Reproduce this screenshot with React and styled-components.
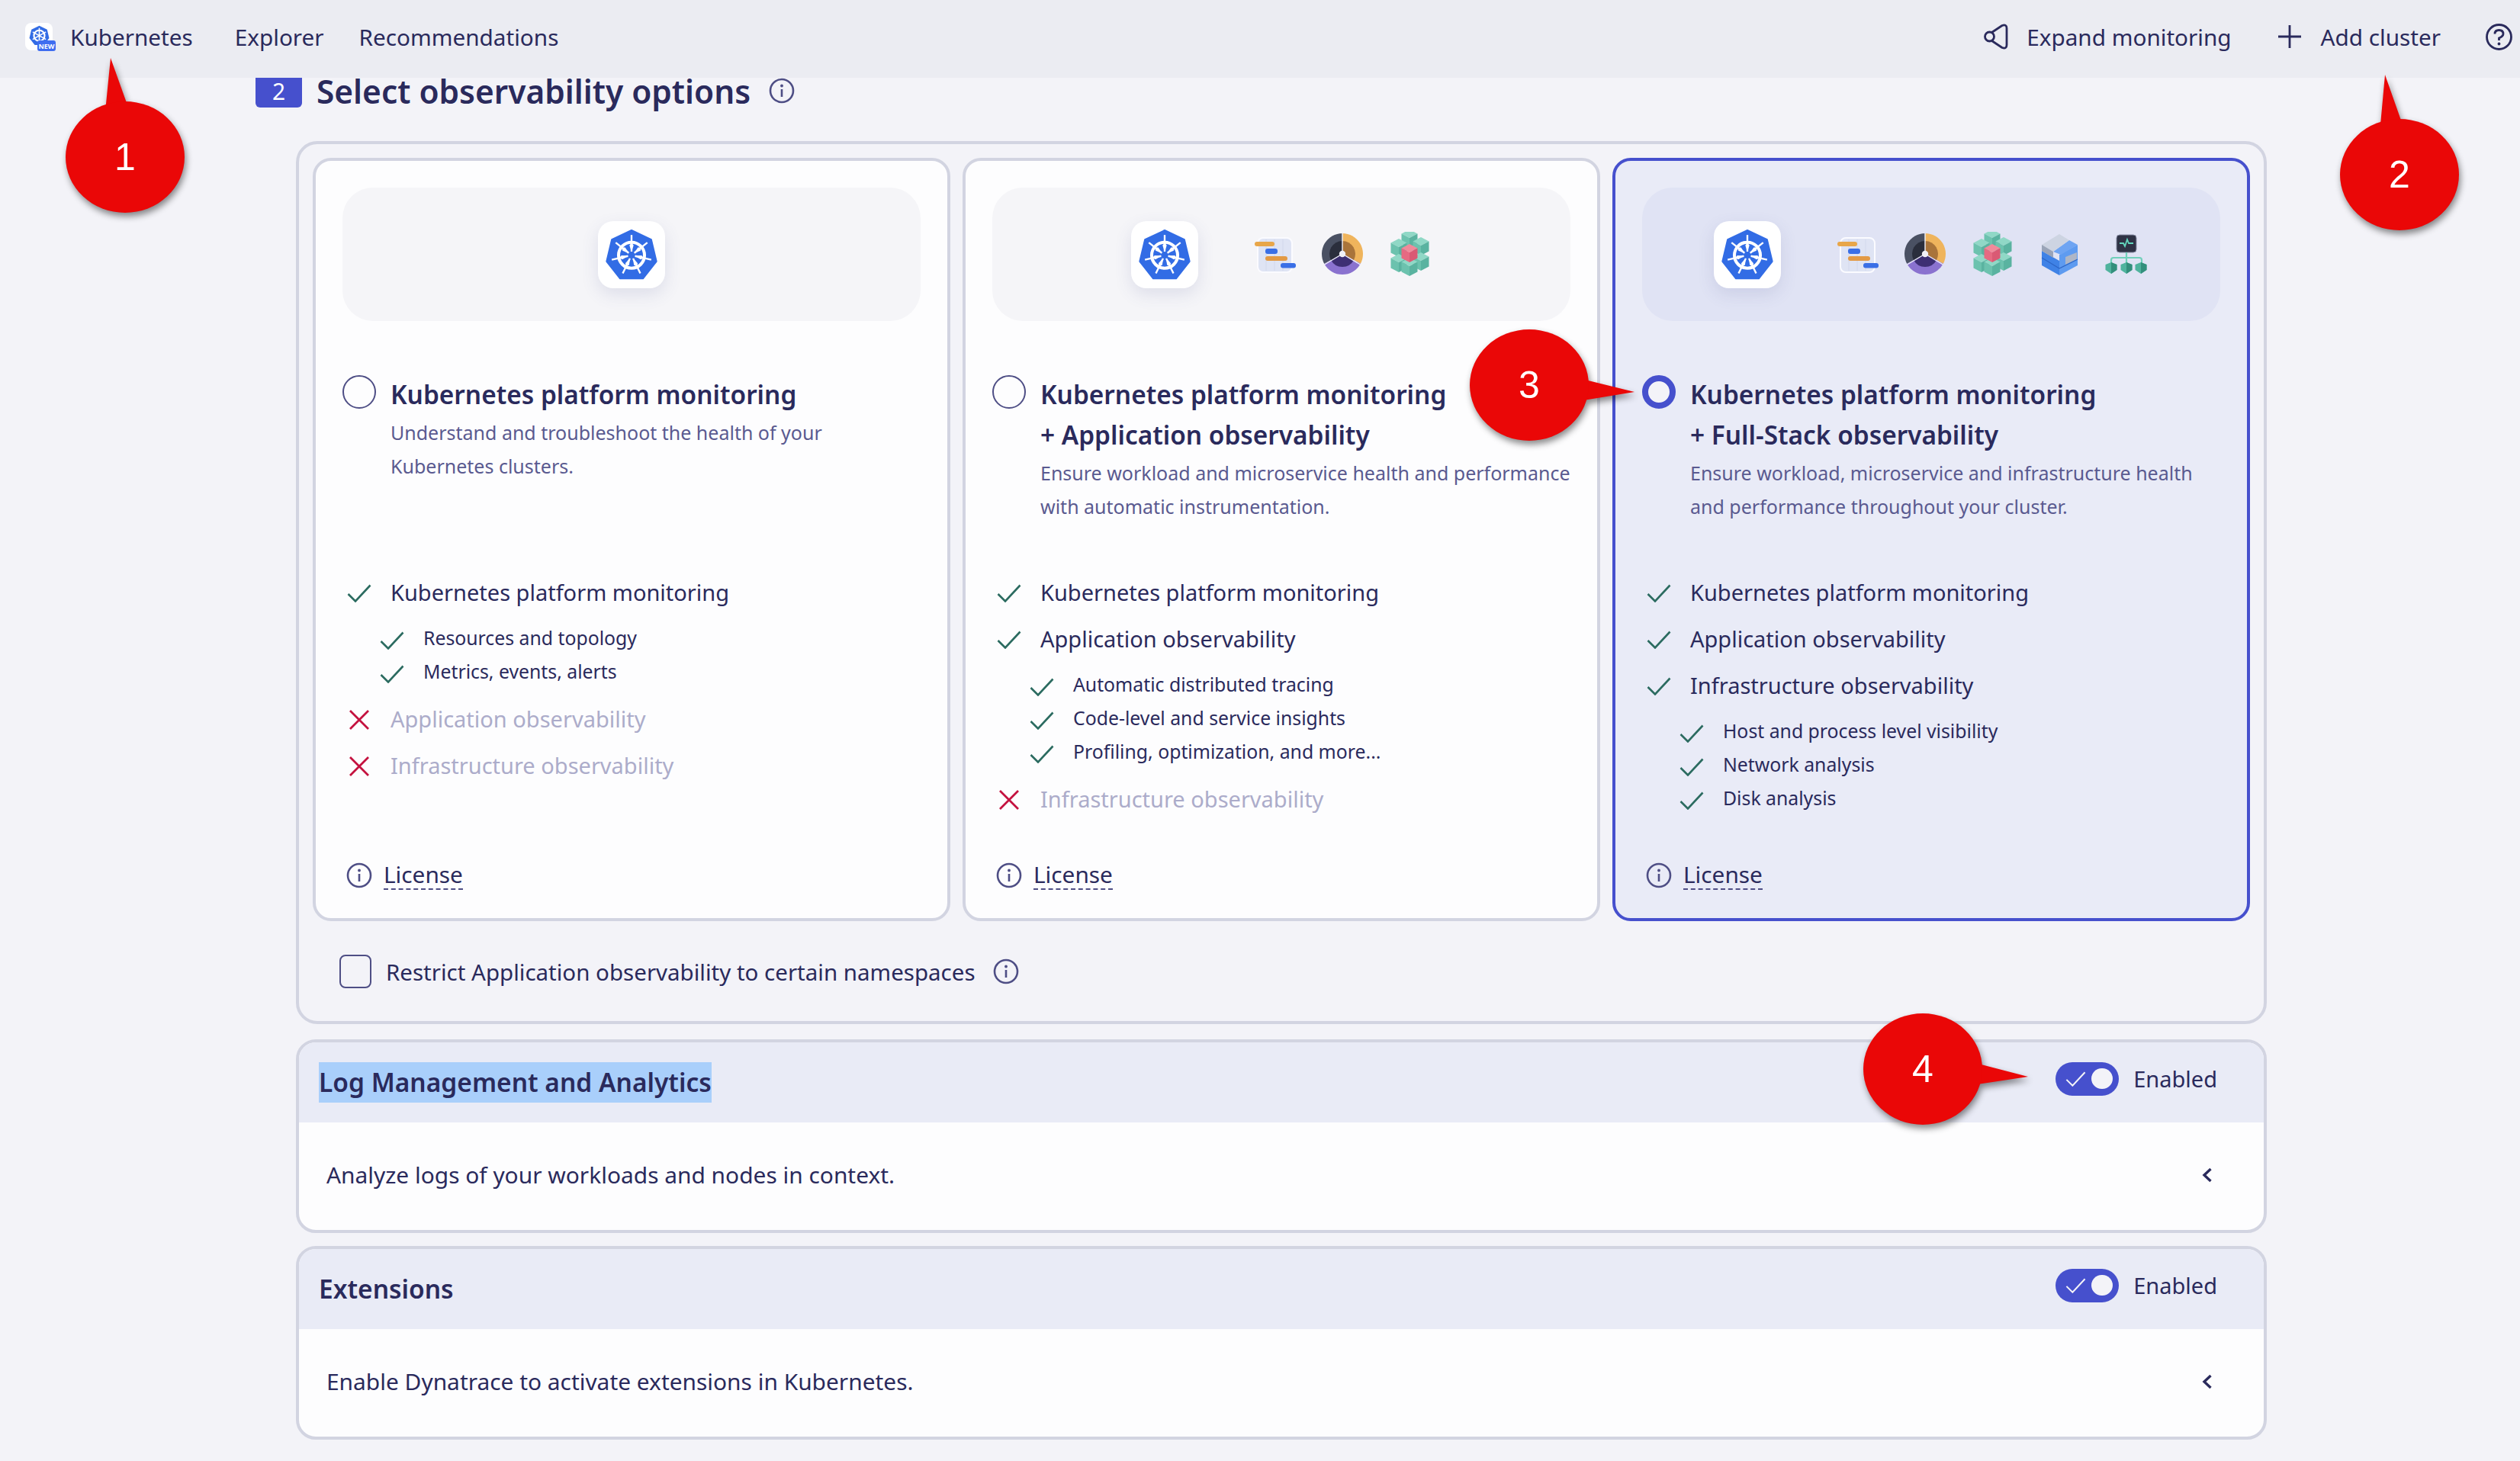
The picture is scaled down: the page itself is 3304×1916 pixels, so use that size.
import React from 'react'
import styled, { createGlobalStyle } from 'styled-components'

const navy = '#2a2a5c'
const muted = '#5a5a90'

const GlobalStyle = createGlobalStyle`
  html, body {
    margin: 0;
    padding: 0;
    background: #f3f3f8;
  }
  * {
    box-sizing: border-box;
  }
`

const Page = styled.div`
  position: relative;
  width: 3304px;
  height: 1916px;
  overflow: hidden;
  background: #f3f3f8;
  color: ${navy};
  font-family: "Noto Sans", "Open Sans", sans-serif;
`

const TopBar = styled.header`
  display: flex;
  align-items: center;
  height: 102px;
  padding: 0 10px 6px 33px;
  background: #ebecf2;
  font-size: 29.7px;
`

const TopLink = styled.span`
  margin-left: ${p => p.$gap}px;
  white-space: nowrap;
`

const TopActions = styled.div`
  display: flex;
  align-items: center;
  margin-left: auto;
`

const TopIcon = styled.svg`
  display: block;
  flex: none;
  margin-left: ${p => p.$gap || 0}px;
`

const Main = styled.main`
  padding-left: 335px;
`

const SectionRow = styled.div`
  display: flex;
  align-items: flex-start;
  height: 83px;
`

const StepBadge = styled.span`
  display: flex;
  align-items: center;
  justify-content: center;
  width: 61px;
  height: 39px;
  padding-bottom: 5px;
  border-radius: 0 0 6px 6px;
  background: #4650cd;
  color: #fff;
  font-size: 30px;
`

const SectionTitle = styled.h2`
  margin: 0 24px 0 19px;
  font-size: 42.4px;
  line-height: 36px;
  font-weight: 600;
  white-space: nowrap;
`

const InfoWrap = styled.span`
  display: flex;
  flex: none;
`

const Panel = styled.section`
  width: 2584px;
  height: 1158px;
  margin-left: 53px;
  padding: 18px 18px 0;
  border: 4px solid #d2d4e1;
  border-radius: 28px;
`

const Cards = styled.div`
  display: grid;
  grid-template-columns: repeat(3, 1fr);
  gap: 16px;
`

const Card = styled.article`
  display: flex;
  flex-direction: column;
  height: 1001px;
  padding: 35px 35px 34px;
  border: 4px solid ${p => (p.$selected ? '#4650cd' : '#d2d4e1')};
  border-radius: 24px;
  background: ${p => (p.$selected ? '#e9ebf7' : '#fdfdfe')};
`

const Illustration = styled.div`
  display: flex;
  align-items: center;
  justify-content: center;
  flex: none;
  height: 175px;
  border-radius: 40px;
  background: ${p => (p.$selected ? '#e0e3f4' : '#f5f5f8')};
`

const LogoTile = styled.div`
  display: flex;
  align-items: center;
  justify-content: center;
  width: 88px;
  height: 88px;
  border-radius: 20px;
  background: #fff;
  box-shadow: 0 8px 22px rgba(80, 86, 150, 0.14);
`

const ProductIcons = styled.div`
  display: flex;
  gap: 28px;
  margin-left: 71px;
`

const Head = styled.div`
  display: grid;
  grid-template-columns: 44px 1fr;
  column-gap: 19px;
  flex: none;
  height: 255px;
  margin-top: 70px;
`

const Radio = styled.span`
  display: block;
  width: 44px;
  height: 44px;
  margin-top: 1px;
  border-radius: 50%;
  border: ${p => (p.$checked ? '8.5px solid #4650cd' : '2.5px solid #4e4e85')};
  background: ${p => (p.$checked ? '#f3f3f8' : '#fdfdfe')};
`

const CardTitle = styled.h3`
  margin: 0;
  font-size: 33.4px;
  line-height: 53px;
  font-weight: 600;
  white-space: nowrap;
`

const CardText = styled.p`
  margin: 1px 0 0;
  font-size: 25px;
  line-height: 44px;
  color: ${muted};
  white-space: nowrap;
`

const FeatureRow = styled.div`
  display: grid;
  grid-template-columns: 44px 1fr;
  column-gap: 19px;
  align-items: center;
  height: 61px;
  font-size: 29px;
  white-space: nowrap;
  color: ${p => (p.$off ? '#acacca' : navy)};
`

const SubList = styled.div`
  margin: 7px 0 10px 43px;
`

const SubRow = styled.div`
  display: grid;
  grid-template-columns: 44px 1fr;
  column-gap: 19px;
  align-items: center;
  height: 44px;
  font-size: 24.8px;
  white-space: nowrap;
`

const MarkCell = styled.span`
  display: flex;
  justify-content: center;
  margin-top: ${p => p.$drop || 0}px;
`

const LicenseRow = styled.div`
  display: flex;
  align-items: center;
  gap: 15px;
  margin-top: auto;
  padding-left: 5px;
  height: 44px;
`

const LicenseLink = styled.span`
  font-size: 29.8px;
  line-height: 36px;
  border-bottom: 2px dashed #4e4e85;
`

const RestrictRow = styled.label`
  display: flex;
  align-items: center;
  height: 44px;
  margin: 44px 0 0 35px;
  font-size: 29.5px;
  white-space: nowrap;
`

const CheckBox = styled.span`
  flex: none;
  width: 42px;
  height: 44px;
  margin-right: 19px;
  border: 2.5px solid #4e4e85;
  border-radius: 8px;
`

const RestrictInfo = styled.span`
  display: flex;
  margin-left: 23px;
`

const Accordion = styled.section`
  width: 2584px;
  height: 254px;
  margin: ${p => p.$gap}px 0 0 53px;
  border: 4px solid #d2d4e1;
  border-radius: 26px;
  overflow: hidden;
  background: #fdfdfe;
`

const AccordionHead = styled.div`
  display: flex;
  align-items: center;
  justify-content: space-between;
  height: 105px;
  padding: 0 61px 0 26px;
  background: #e9ebf6;
`

const AccordionTitle = styled.h3`
  margin: 0;
  font-size: 33.5px;
  line-height: 53px;
  font-weight: 600;
  white-space: nowrap;
  background: ${p => (p.$selected ? '#a9cffb' : 'transparent')};
`

const ToggleGroup = styled.div`
  display: flex;
  align-items: center;
  gap: 19px;
  padding-bottom: 10px;
  font-size: 29px;
`

const Toggle = styled.span`
  display: flex;
  align-items: center;
  justify-content: space-between;
  width: 83px;
  height: 44px;
  padding: 0 8px 0 13px;
  border-radius: 22px;
  background: #4650cd;
`

const Knob = styled.span`
  width: 28px;
  height: 27px;
  border-radius: 14px;
  background: #f3f3f8;
`

const AccordionBody = styled.div`
  display: flex;
  align-items: center;
  justify-content: space-between;
  height: 137px;
  padding: 0 66px 0 36px;
  font-size: 29.9px;
  white-space: nowrap;
`

const CalloutBox = styled.div`
  position: absolute;
  left: ${p => p.$x - 160}px;
  top: ${p => p.$y - 160}px;
  display: flex;
  align-items: center;
  justify-content: center;
  width: 320px;
  height: 320px;
  pointer-events: none;
`

const CalloutShape = styled.svg`
  position: absolute;
  inset: 0;
  overflow: visible;
  filter: drop-shadow(2px 5px 4px rgba(0, 0, 0, 0.45));
`

const CalloutNumber = styled.span`
  position: relative;
  color: #fff;
  font-family: "Liberation Sans", Arial, sans-serif;
  font-size: 50px;
  line-height: 1;
`

const InfoIcon = ({ size = 34 }) => (
  <svg width={size} height={size} viewBox="0 0 34 34" fill="none">
    <circle cx="17" cy="17" r="15" stroke="#4e4e85" strokeWidth="2.6" />
    <circle cx="17" cy="10.5" r="1.9" fill="#4e4e85" />
    <path d="M17 15v10" stroke="#4e4e85" strokeWidth="2.6" />
  </svg>
)

const Check = ({ w = 32, h = 24, color = '#2b6b60', sw = 2.6 }) => (
  <svg width={w} height={h} viewBox="0 0 32 24" fill="none">
    <path d="M1.5 13 L11 22.5 L30.5 1.5" stroke={color} strokeWidth={sw} />
  </svg>
)

const Cross = () => (
  <svg width="28" height="28" viewBox="0 0 28 28" fill="none">
    <path d="M2 2 L26 26 M26 2 L2 26" stroke="#c4113f" strokeWidth="2.8" />
  </svg>
)

const KubeLogo = ({ size = 68 }) => {
  const spokes = [0, 1, 2, 3, 4, 5, 6].map(i => (i * 360) / 7)
  return (
    <svg width={size} height={size} viewBox="0 0 100 100">
      <path
        d="M50 3 L88 21 L98 63 L72 96 L28 96 L2 63 L12 21 Z"
        fill="#326ce5"
        stroke="#326ce5"
        strokeWidth="3"
        strokeLinejoin="round"
      />
      <circle cx="50" cy="51" r="25" fill="none" stroke="#fff" strokeWidth="6" />
      {spokes.map(a => (
        <g key={a} transform={`rotate(${a} 50 51)`}>
          <path d="M50 44 L50 12" stroke="#fff" strokeWidth="3.5" />
          <path d="M50 45 L46 32 L50 27 L54 32 Z" fill="#fff" />
        </g>
      ))}
      <circle cx="50" cy="51" r="3" fill="#326ce5" />
    </svg>
  )
}

const HeaderLogo = () => (
  <svg width="40" height="38" viewBox="0 0 40 38">
    <rect x="0" y="1" width="36" height="36" rx="8" fill="#fff" />
    <g transform="translate(5 4) scale(0.27)">
      <path d="M50 3 L88 21 L98 63 L72 96 L28 96 L2 63 L12 21 Z" fill="#326ce5" />
      <circle cx="50" cy="51" r="26" fill="none" stroke="#fff" strokeWidth="8" />
      <path d="M50 14 V88 M18 33 L82 69 M18 69 L82 33" stroke="#fff" strokeWidth="6" />
    </g>
    <rect x="16" y="24" width="24" height="14" rx="3" fill="#3f6df0" />
    <text x="28" y="34.5" textAnchor="middle" fontSize="9" fontWeight="700" fill="#fff" fontFamily="Noto Sans">NEW</text>
  </svg>
)

const GanttIcon = () => (
  <svg width="60" height="60" viewBox="0 0 60 60">
    <rect x="7" y="8" width="45" height="45" rx="7" fill="#dfe4f4" stroke="#fbfbff" strokeWidth="2" />
    <path d="M18 10 V51 M29 10 V51 M40 10 V51" stroke="#d2d8ec" strokeWidth="1" />
    <rect x="3" y="13" width="26" height="6" rx="3" fill="#e8a649" />
    <rect x="17" y="22" width="16" height="7" rx="3" fill="#3a6fe6" />
    <rect x="17" y="32" width="29" height="6" rx="3" fill="#e39a45" />
    <rect x="37" y="41" width="20" height="6.5" rx="3" fill="#3a6fe6" />
  </svg>
)

const sector = (cx, cy, r, from, to) => {
  const pt = deg => {
    const rad = ((deg - 90) * Math.PI) / 180
    return `${(cx + r * Math.cos(rad)).toFixed(2)} ${(cy + r * Math.sin(rad)).toFixed(2)}`
  }
  return `M${cx} ${cy} L${pt(from)} A${r} ${r} 0 0 1 ${pt(to)} Z`
}

const PieIcon = () => (
  <svg width="60" height="60" viewBox="0 0 60 60">
    <path d={sector(30, 29, 27, 0, 118)} fill="#efb45c" />
    <path d={sector(30, 29, 27, 118, 242)} fill="#8a72cf" />
    <path d={sector(30, 29, 27, 242, 360)} fill="#4a5163" />
    <path d={sector(30, 29, 17, 0, 118)} fill="#a9743a" />
    <path d={sector(30, 29, 17, 118, 242)} fill="#3d2f73" />
    <path d={sector(30, 29, 17, 242, 360)} fill="#2a2e3c" />
    <path d="M30 2 V29 M30 29 L53.5 43 M30 29 L6.5 43" stroke="#f1f1fa" strokeWidth="1.4" />
    <circle cx="30" cy="29" r="4.2" fill="#f0f0f6" />
  </svg>
)

const IsoCube = ({ x, y, top, left, right }) => (
  <g>
    <polygon points={`${x},${y - 12} ${x + 10.5},${y - 6.5} ${x},${y - 1} ${x - 10.5},${y - 6.5}`} fill={top} />
    <polygon points={`${x - 10.5},${y - 6.5} ${x},${y - 1} ${x},${y + 12} ${x - 10.5},${y + 6.5}`} fill={left} />
    <polygon points={`${x + 10.5},${y - 6.5} ${x},${y - 1} ${x},${y + 12} ${x + 10.5},${y + 6.5}`} fill={right} />
  </g>
)

const CubesIcon = () => {
  const teal = [[30, 9], [16, 21], [45, 19], [16, 41], [45, 39], [30, 46]]
  return (
    <svg width="60" height="60" viewBox="0 0 60 60">
      {teal.map(([x, y]) => (
        <IsoCube key={`${x}-${y}`} x={x} y={y} top="#90d8c6" left="#6cc2ae" right="#5ab3a0" />
      ))}
      <IsoCube x={30} y={28} top="#f08a9a" left="#e66a82" right="#da5a74" />
    </svg>
  )
}

const BlocksIcon = () => (
  <svg width="60" height="60" viewBox="0 0 60 60" fill="none">
    <polygon points="7,25 30,38 30,57 7,44" fill="#3f82e6" />
    <polygon points="30,30 54,17 54,44 30,57" fill="#5e9bf0" />
    <polygon points="43,11 54,17 32,30 22,26" fill="#6ea4f2" />
    <polygon points="30,3 43,11 22,26 7,17" fill="#cdd4e2" />
    <polygon points="7,17 22,26 22,34 7,25" fill="#9aa4b8" />
    <polygon points="38,33 53,27 53,36 38,43" fill="#aeb6c6" />
    <path d="M7 34 L30 48 L54 36" stroke="#2d66c6" strokeWidth="1.2" />
  </svg>
)

const NetworkIcon = () => (
  <svg width="60" height="60" viewBox="0 0 60 60" fill="none">
    <rect x="17" y="4" width="26" height="23" rx="4" fill="#2f3345" stroke="#8a8fa6" strokeWidth="1" />
    <path d="M21 15 H26 L28 19 L31 10 L33 15 H39" stroke="#63d6bd" strokeWidth="1.8" />
    <path d="M30 27 V44 M10 44 V37 Q10 34 13 34 H47 Q50 34 50 37 V44" stroke="#71d0ba" strokeWidth="2.2" />
    {[10, 30, 49].map(x => (
      <g key={x}>
        <path d={`M${x - 7.5} 43 L${x} 40 L${x + 7.5} 43 V50 L${x} 55 L${x - 7.5} 50 Z`} fill="#4fb39d" />
        <path d={`M${x} 40 L${x + 7.5} 43 V50 L${x} 55 Z`} fill="#338f7c" />
      </g>
    ))}
  </svg>
)

const Chevron = () => (
  <svg width="16" height="20" viewBox="0 0 16 20" fill="none">
    <path d="M12.5 2 L4 10 L12.5 18" stroke={navy} strokeWidth="3.4" />
  </svg>
)

const ToggleSwitch = () => (
  <ToggleGroup>
    <Toggle>
      <Check w={27} h={20} color="#f3f3f8" sw={2.4} />
      <Knob />
    </Toggle>
    Enabled
  </ToggleGroup>
)

const Callout = ({ n, x, y, tail }) => (
  <CalloutBox $x={x} $y={y}>
    <CalloutShape viewBox="-160 -160 320 320" width="320" height="320">
      <path d={`M${tail[0]} L${tail[1]} L${tail[2]} Z`} fill="#ea0707" />
      <ellipse cx="0" cy="0" rx="78" ry="73" fill="#ea0707" />
    </CalloutShape>
    <CalloutNumber>{n}</CalloutNumber>
  </CalloutBox>
)

const options = [
  {
    title: ['Kubernetes platform monitoring'],
    text: ['Understand and troubleshoot the health of your', 'Kubernetes clusters.'],
    icons: [],
    features: [
      { label: 'Kubernetes platform monitoring', subs: ['Resources and topology', 'Metrics, events, alerts'] },
      { label: 'Application observability', off: true },
      { label: 'Infrastructure observability', off: true },
    ],
  },
  {
    title: ['Kubernetes platform monitoring', '+ Application observability'],
    text: ['Ensure workload and microservice health and performance', 'with automatic instrumentation.'],
    icons: [GanttIcon, PieIcon, CubesIcon],
    features: [
      { label: 'Kubernetes platform monitoring' },
      { label: 'Application observability', subs: ['Automatic distributed tracing', 'Code-level and service insights', 'Profiling, optimization, and more...'] },
      { label: 'Infrastructure observability', off: true },
    ],
  },
  {
    title: ['Kubernetes platform monitoring', '+ Full-Stack observability'],
    text: ['Ensure workload, microservice and infrastructure health', 'and performance throughout your cluster.'],
    icons: [GanttIcon, PieIcon, CubesIcon, BlocksIcon, NetworkIcon],
    selected: true,
    features: [
      { label: 'Kubernetes platform monitoring' },
      { label: 'Application observability' },
      { label: 'Infrastructure observability', subs: ['Host and process level visibility', 'Network analysis', 'Disk analysis'] },
    ],
  },
]

const OptionCard = ({ option }) => (
  <Card $selected={option.selected}>
    <Illustration $selected={option.selected}>
      <LogoTile>
        <KubeLogo />
      </LogoTile>
      {option.icons.length > 0 && (
        <ProductIcons>
          {option.icons.map((Icon, i) => (
            <Icon key={i} />
          ))}
        </ProductIcons>
      )}
    </Illustration>
    <Head>
      <Radio $checked={option.selected} />
      <div>
        {option.title.map(line => (
          <CardTitle key={line}>{line}</CardTitle>
        ))}
        <CardText>
          {option.text[0]}
          <br />
          {option.text[1]}
        </CardText>
      </div>
    </Head>
    {option.features.map(f => (
      <React.Fragment key={f.label}>
        <FeatureRow $off={f.off}>
          <MarkCell $drop={2}>{f.off ? <Cross /> : <Check />}</MarkCell>
          {f.label}
        </FeatureRow>
        {f.subs && (
          <SubList>
            {f.subs.map(s => (
              <SubRow key={s}>
                <MarkCell $drop={7}>
                  <Check />
                </MarkCell>
                {s}
              </SubRow>
            ))}
          </SubList>
        )}
      </React.Fragment>
    ))}
    <LicenseRow>
      <InfoIcon />
      <LicenseLink>License</LicenseLink>
    </LicenseRow>
  </Card>
)

const App = () => (
  <Page>
    <GlobalStyle />
    <TopBar>
      <HeaderLogo />
      <TopLink $gap={19}>Kubernetes</TopLink>
      <TopLink $gap={55}>Explorer</TopLink>
      <TopLink $gap={46}>Recommendations</TopLink>
      <TopActions>
        <TopIcon width="32" height="34" viewBox="0 0 32 34" fill="none">
          <path
            d="M10.5 11.5 L24 2.5 Q30 0.5 30 6 V28 Q30 33.5 24 31.5 L10.5 22.5"
            stroke={navy}
            strokeWidth="2.8"
            strokeLinejoin="round"
          />
          <circle cx="7.5" cy="17" r="6" stroke={navy} strokeWidth="2.8" />
        </TopIcon>
        <TopLink $gap={24}>Expand monitoring</TopLink>
        <TopIcon $gap={61} width="30" height="30" viewBox="0 0 30 30" fill="none">
          <path d="M15 0 V30 M0 15 H30" stroke={navy} strokeWidth="2.8" />
        </TopIcon>
        <TopLink $gap={26}>Add cluster</TopLink>
        <TopIcon $gap={59} width="35" height="35" viewBox="0 0 35 35" fill="none">
          <circle cx="17.5" cy="17.5" r="16" stroke={navy} strokeWidth="2.8" />
          <path d="M12 13.5 Q12 8.5 17.5 8.5 Q23 8.5 23 13.5 Q23 16.5 17.5 19 V22" stroke={navy} strokeWidth="2.8" />
          <circle cx="17.5" cy="26.5" r="1.9" fill={navy} />
        </TopIcon>
      </TopActions>
    </TopBar>
    <Main>
      <SectionRow>
        <StepBadge>2</StepBadge>
        <SectionTitle>Select observability options</SectionTitle>
        <InfoWrap>
          <InfoIcon />
        </InfoWrap>
      </SectionRow>
      <Panel>
        <Cards>
          {options.map(o => (
            <OptionCard key={o.title.join()} option={o} />
          ))}
        </Cards>
        <RestrictRow>
          <CheckBox />
          Restrict Application observability to certain namespaces
          <RestrictInfo>
            <InfoIcon />
          </RestrictInfo>
        </RestrictRow>
      </Panel>
      <Accordion $gap={20}>
        <AccordionHead>
          <AccordionTitle $selected>Log Management and Analytics</AccordionTitle>
          <ToggleSwitch />
        </AccordionHead>
        <AccordionBody>
          Analyze logs of your workloads and nodes in context.
          <Chevron />
        </AccordionBody>
      </Accordion>
      <Accordion $gap={17}>
        <AccordionHead>
          <AccordionTitle>Extensions</AccordionTitle>
          <ToggleSwitch />
        </AccordionHead>
        <AccordionBody>
          Enable Dynatrace to activate extensions in Kubernetes.
          <Chevron />
        </AccordionBody>
      </Accordion>
    </Main>
    <Callout n="1" x={164} y={206} tail={['-19 -130', '-26 -60', '6 -60']} />
    <Callout n="2" x={3146} y={229} tail={['-19 -131', '-25.5 -60', '6 -60']} />
    <Callout n="3" x={2005} y={505} tail={['138 9', '65 -9', '65 21']} />
    <Callout n="4" x={2521} y={1402} tail={['138 10', '65 -9', '65 21']} />
  </Page>
)

export default App
